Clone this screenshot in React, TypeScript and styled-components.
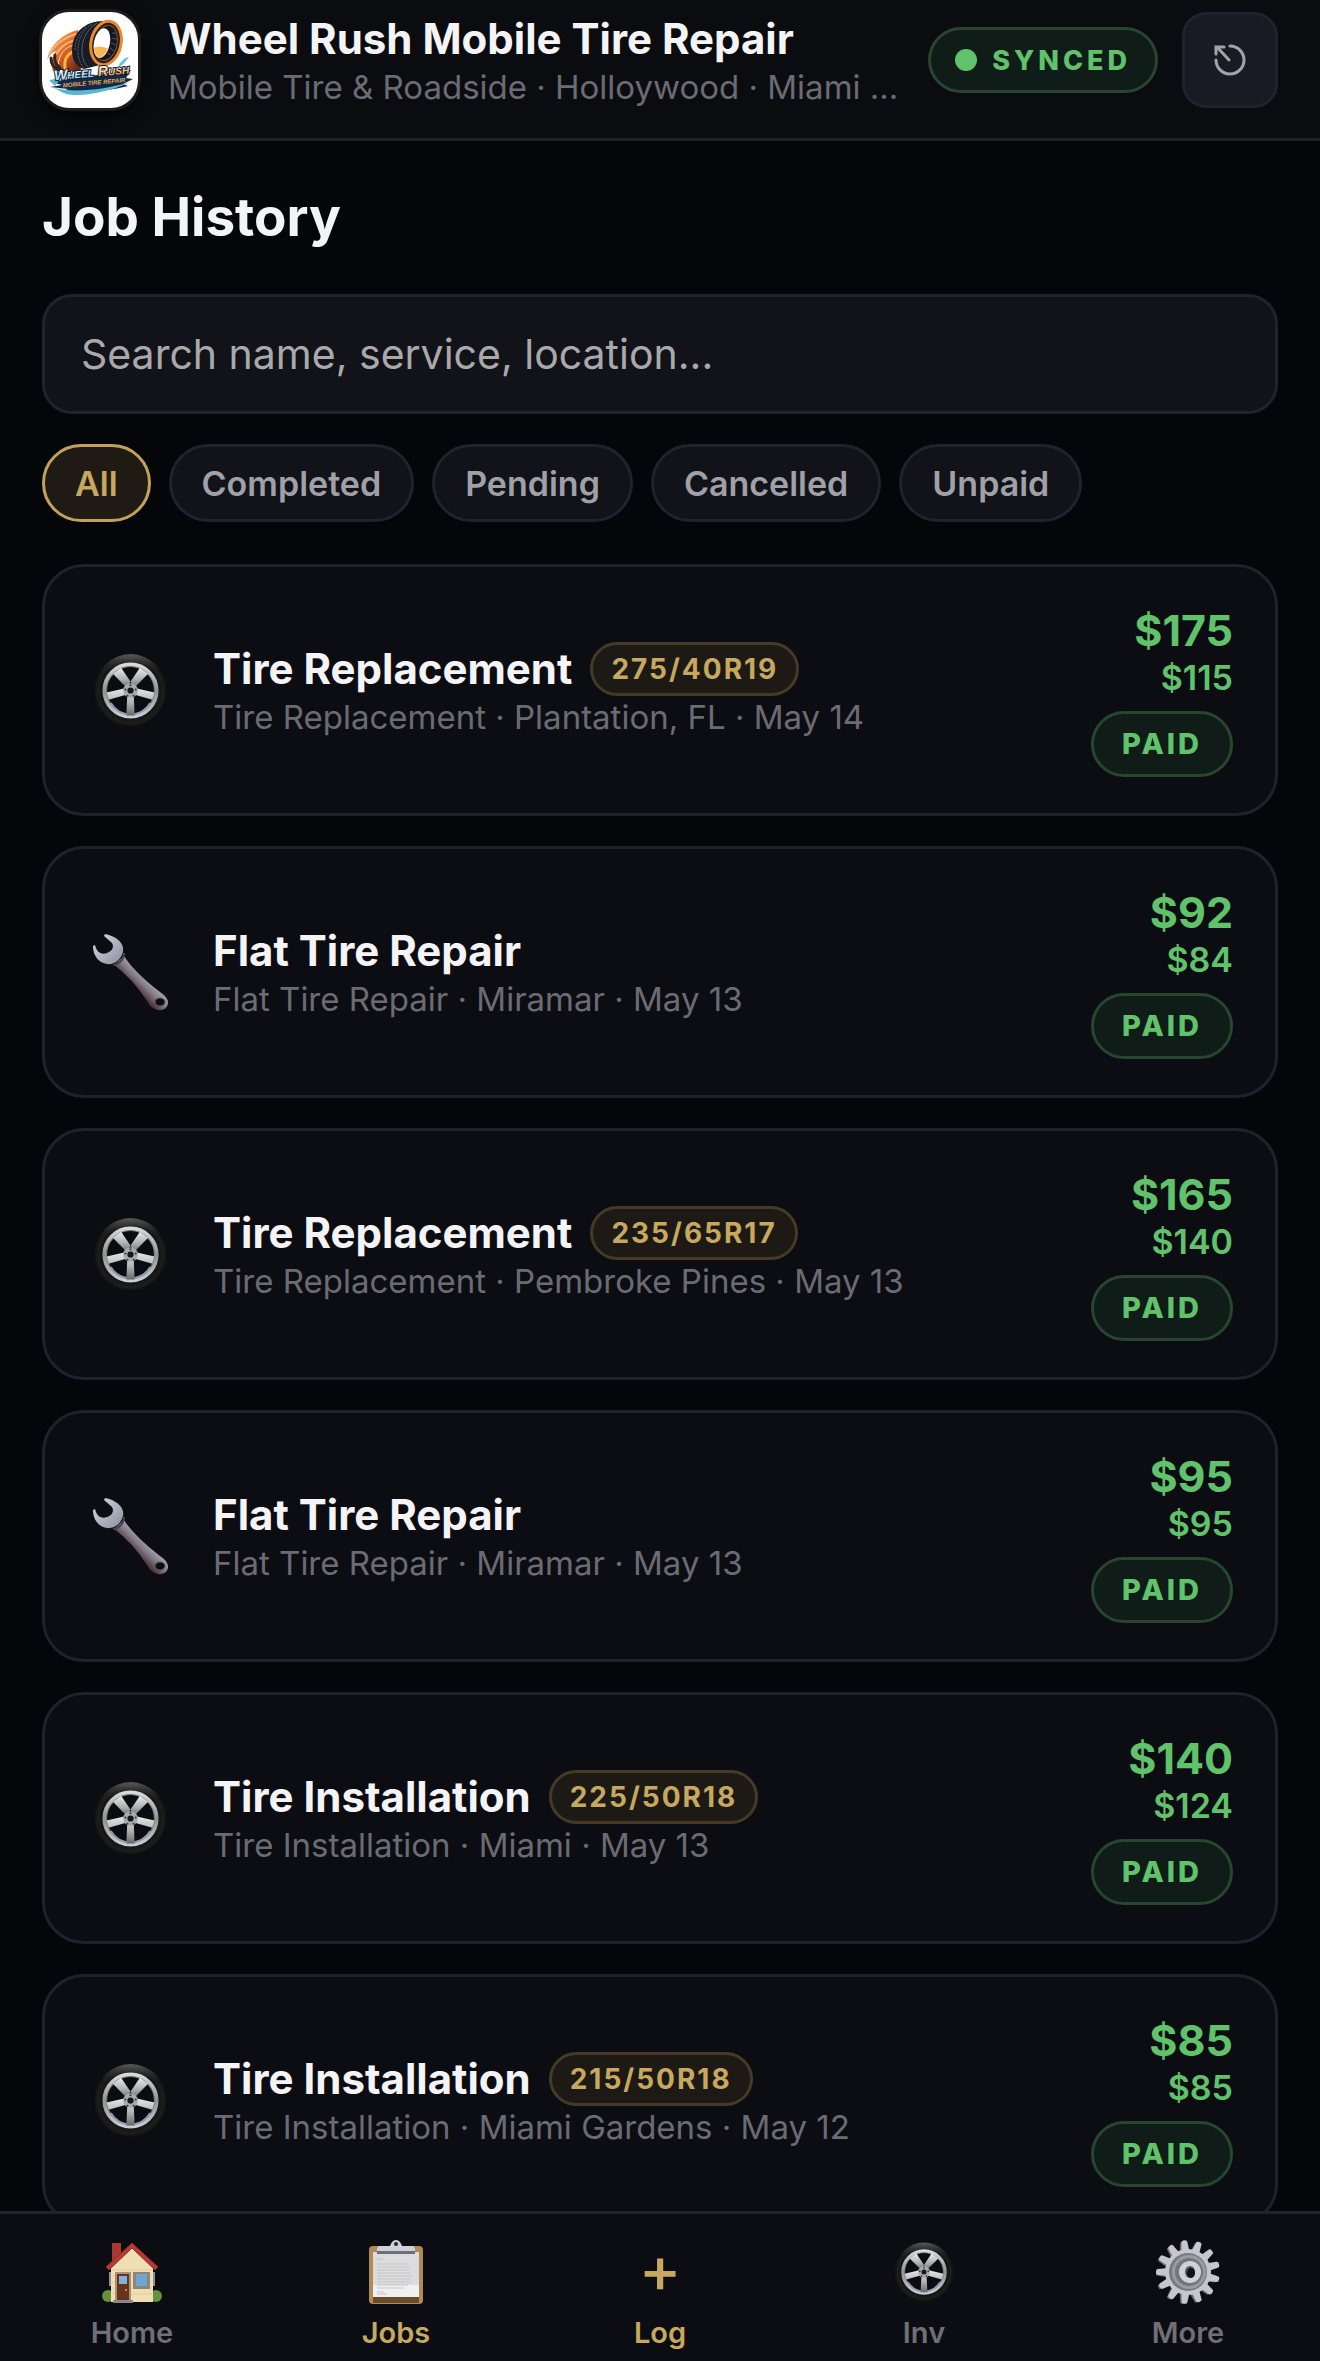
import React, { useState } from 'react';
import styled, { createGlobalStyle } from 'styled-components';

interface Job {
	id: number;
	service: string;
	size?: string;
	location: string;
	date: string;
	price: number;
	profit: number;
}

const jobs: Job[] = [
	{ id: 1, service: 'Tire Replacement', size: '275/40R19', location: 'Plantation, FL', date: 'May 14', price: 175, profit: 115 },
	{ id: 2, service: 'Flat Tire Repair', location: 'Miramar', date: 'May 13', price: 92, profit: 84 },
	{ id: 3, service: 'Tire Replacement', size: '235/65R17', location: 'Pembroke Pines', date: 'May 13', price: 165, profit: 140 },
	{ id: 4, service: 'Flat Tire Repair', location: 'Miramar', date: 'May 13', price: 95, profit: 95 },
	{ id: 5, service: 'Tire Installation', size: '225/50R18', location: 'Miami', date: 'May 13', price: 140, profit: 124 },
	{ id: 6, service: 'Tire Installation', size: '215/50R18', location: 'Miami Gardens', date: 'May 12', price: 85, profit: 85 },
];

const filters = ['All', 'Completed', 'Pending', 'Cancelled', 'Unpaid'];

const Logo = () => (
	<svg viewBox='0 0 96 96' role='img' aria-label='Wheel Rush'>
		<defs>
			<linearGradient id='flame' x1='0' y1='0' x2='1' y2='1'>
				<stop offset='0' stopColor='#f9c28b' />
				<stop offset='0.5' stopColor='#e2682a' />
				<stop offset='1' stopColor='#5a1c12' />
			</linearGradient>
			<linearGradient id='ice' x1='0' y1='0' x2='0' y2='1'>
				<stop offset='0.3' stopColor='#ffffff' />
				<stop offset='1' stopColor='#6fd0ea' />
			</linearGradient>
			<linearGradient id='fire' x1='0' y1='0' x2='0' y2='1'>
				<stop offset='0.3' stopColor='#fff3d0' />
				<stop offset='1' stopColor='#f08a1e' />
			</linearGradient>
		</defs>
		<rect width='96' height='96' fill='#fff' />
		<path d='M36 18C20 22 8 33 5 48c3-6 6-8 9-9-5 8-5 14-3 20h28z' fill='url(#flame)' />
		<g fill='none' strokeLinecap='round'>
			<path d='M34 22C22 26 12 33 8 42M33 28c-10 3-17 9-20 17' stroke='#f8b26b' strokeWidth='2' />
			<path d='M32 33c-9 2-15 9-16 20' stroke='#fbe0a8' strokeWidth='1' />
			<path d='M31 40c-6 2-9 8-8 16' stroke='#ffb43c' strokeWidth='3' />
			<path d='M9 46c0 6 3 10 8 12M13 43c-1 5 1 10 5 13' stroke='#30241f' strokeWidth='3' />
		</g>
		<path d='M78 51c3-4 6-6 9-6-3 4-6 8-11 11zM82 56c3-2 5-3 7-2-3 3-6 5-10 5z' fill='#69c7dd' />
		<path d='M64 9C44 8 30 20 30 38c0 10 4 17 12 19l16-4z' fill='#1a1c25' />
		<g fill='none' stroke='#56606f' strokeWidth='1'>
			<path d='M50 12c-10 7-14 16-14 26 0 8 2 14 6 18M44 15c-8 7-11 15-11 24' strokeDasharray='2 1' />
			<path d='M55 11C44 18 40 28 40 38c0 8 2 13 6 17' />
		</g>
		<g transform='rotate(12 64 31)'>
			<ellipse cx='64' cy='31' rx='15' ry='22' fill='#1c1e28' stroke='#e8892d' strokeWidth='3' />
			<ellipse cx='64' cy='31' rx='11' ry='18' fill='#151823' stroke='#9a4c1b' strokeWidth='1' />
			<ellipse cx='60' cy='32' rx='8' ry='15' fill='#fff' />
			<path d='M68 20l5-1M69 25l5 0M69 30l5 1M69 35l4 2M67 40l4 2' stroke='#475064' strokeWidth='1' />
			<path d='M53 38c4-2 9-3 14-2-1 6-4 10-7 11-3-1-6-4-7-9z' fill='#f8b755' />
		</g>
		<path d='M9 70l80-12-5 8 7 1-10 5 5 2c-16 4-42 8-68 6l8-3-18-2 12-2z' fill='#12294a' />
		<path d='M12 76c20 5 50 2 76-6-15 8-48 16-64 12M7 68l12-2-6 8z' fill='#59b9d3' />
		<g transform='rotate(-5 48 62)' fontFamily='"Liberation Sans", Arial, sans-serif' fontStyle='italic' fontWeight='700'>
			<g stroke='#101a33' strokeWidth='2' paintOrder='stroke'>
				<text x='12' y='65' fontSize='14' fill='url(#ice)'>W<tspan fontSize='10'>HEEL</tspan></text>
				<text x='56' y='65' fontSize='14' fill='url(#fire)'>R<tspan fontSize='10'>USH</tspan></text>
			</g>
			<text x='20' y='73' fontSize='6' fill='#e7ad51'>MOBILE TIRE REPAIR</text>
		</g>
	</svg>
);

const SyncIcon = () => (
	<svg
		viewBox='0 0 32 32'
		width='32'
		height='32'
		fill='none'
		stroke='currentColor'
		strokeWidth='3'
		strokeLinecap='round'
		aria-hidden='true'
	>
		<path d='M16 2a14 14 0 1 1-14 14' />
		<path d='M15 16L3 3M2 10V3h8' />
	</svg>
);

const TireIcon = ({ id }: { id: string }) => (
	<svg viewBox='-2 -2 76 76' aria-hidden='true'>
		<defs>
			<radialGradient id={`${id}-rubber`} cx='0.5' cy='0.5' r='0.5'>
				<stop offset='0.7' stopColor='#101010' />
				<stop offset='0.88' stopColor='#1d1d1d' />
				<stop offset='1' stopColor='#0a0a0a' />
			</radialGradient>
			<linearGradient id={`${id}-shine`} x1='0' y1='0' x2='0' y2='1'>
				<stop offset='0' stopColor='#888' stopOpacity='0.6' />
				<stop offset='0.24' stopColor='#333' stopOpacity='0' />
			</linearGradient>
			<linearGradient id={`${id}-rim`} x1='0' y1='0' x2='0' y2='1'>
				<stop offset='0' stopColor='#dadada' />
				<stop offset='0.5' stopColor='#929292' />
				<stop offset='1' stopColor='#c9ccd0' />
			</linearGradient>
			<linearGradient id={`${id}-spoke`} x1='0' y1='0' x2='0' y2='1'>
				<stop offset='0' stopColor='#ececec' />
				<stop offset='0.55' stopColor='#b0b0b0' />
				<stop offset='1' stopColor='#686868' />
			</linearGradient>
		</defs>
		<circle cx='36' cy='36' r='36' fill={`url(#${id}-rubber)`} />
		<circle cx='36' cy='36' r='35' fill={`url(#${id}-shine)`} />
		<circle cx='36' cy='36' r='25' fill='#0a0c12' stroke={`url(#${id}-rim)`} strokeWidth='4' />
		<circle cx='36' cy='36' r='23' fill='none' stroke='#7a7f86' strokeWidth='1' />
		<path d='M17 48a22 22 0 0 0 38 0' fill='none' stroke='#8a9cb2' strokeWidth='2' />
		<g fill={`url(#${id}-spoke)`}>
			<path d='M33 34L19 20l8-6 12 18zM39 34l14-14-8-6-12 18z' />
			<path d='M34 33L13 38l2 7 21-6zM38 33l21 5-2 7-21-6zM33 38l-1 22h8l-1-22z' />
		</g>
		<circle cx='36' cy='36' r='7' fill='#a9a9a9' />
		<circle cx='36' cy='36' r='3' fill='#16181d' />
		<g fill='#3a3a3c'>
			<circle cx='36' cy='31' r='1' />
			<circle cx='31' cy='35' r='1' />
			<circle cx='41' cy='35' r='1' />
			<circle cx='33' cy='41' r='1' />
			<circle cx='39' cy='41' r='1' />
		</g>
	</svg>
);

const WrenchIcon = ({ id }: { id: string }) => (
	<svg viewBox='-1 -1 79 79' aria-hidden='true'>
		<defs>
			<linearGradient id={`${id}-handle`} gradientUnits='userSpaceOnUse' x1='54' y1='42' x2='42' y2='54'>
				<stop offset='0' stopColor='#a9a7b4' />
				<stop offset='0.5' stopColor='#817983' />
				<stop offset='1' stopColor='#4b3537' />
			</linearGradient>
			<linearGradient id={`${id}-head`} x1='0' y1='0' x2='1' y2='1'>
				<stop offset='0' stopColor='#d5dbe4' />
				<stop offset='1' stopColor='#8b8e9e' />
			</linearGradient>
		</defs>
		<path
			d='M22 31L32 22Q42 38 68 58Q77 64 76 70Q74 77 66 76Q59 75 55 67Q40 44 22 31z'
			fill={`url(#${id}-handle)`}
		/>
		<path
			d='M13 0C24 2 33 9 31 18C29 26 22 31 15 30C7 29 1 22 1 12L3 11C5 19 10 21 15 19C21 17 22 12 20 9L12 2z'
			fill={`url(#${id}-head)`}
		/>
		<path d='M21 31c7-1 11-6 11-12' fill='none' stroke='#44444f' strokeWidth='2' />
		<ellipse cx='68' cy='68' rx='5' ry='4' fill='#0c0d12' stroke='#5d555c' strokeWidth='1' />
	</svg>
);

const HouseIcon = () => (
	<svg viewBox='0 0 64 64' aria-hidden='true'>
		<path d='M12 3h9v20l-9 7z' fill='#a93832' />
		<circle cx='8' cy='56' r='6' fill='#66913f' />
		<circle cx='56' cy='56' r='6' fill='#66913f' />
		<path d='M11 26L32 6l21 20v36H11z' fill='#f0dfb5' />
		<path d='M12 30h40M12 36h40M12 42h40M12 48h40M12 54h40' stroke='#dfcb9c' strokeWidth='1' />
		<path d='M32 3l26 24-3 3-23-22L9 30l-3-3z' fill='#b83a35' stroke='#8f2a27' strokeWidth='1' />
		<path d='M15 32h16v29H15z' fill='#a99078' />
		<path d='M17 34h12v26H17z' fill='#67331f' />
		<path d='M19 36h8v8h-8z' fill='#7fb3de' />
		<circle cx='26' cy='50' r='1' fill='#e4b45c' />
		<path d='M33 32h17v17H33z' fill='#8f8577' />
		<path d='M36 34h11v12H36z' fill='#6ea6d6' />
		<path d='M9 32h2v14H9zM53 32h2v14h-2z' fill='#8e8f94' />
		<path d='M13 60h20v3H13z' fill='#8d8681' />
	</svg>
);

const ClipboardIcon = () => (
	<svg viewBox='0 0 64 64' aria-hidden='true'>
		<rect x='5' y='6' width='54' height='58' rx='4' fill='#b08b57' />
		<path d='M9 57h46v6H9z' fill='#6a4b28' />
		<path d='M9 12h46v45H9z' fill='#dcdcde' />
		<path d='M9 45h46v12H9z' fill='#f0f0f2' />
		<path
			d='M13 19h7M13 24h31M13 27h33M13 30h32M13 33h34M13 36h35M13 39h33M13 42h34M13 45h31M13 48h27M13 52h7M13 54h10'
			stroke='#c6c6c9'
			strokeWidth='1'
		/>
		<path d='M13 14V9c0-2 1-3 3-3h10c1-3 3-6 6-6s5 3 6 6h10c2 0 3 1 3 3v5z' fill='#cfd1da' />
		<path d='M13 11h38v3H13z' fill='#6e6f75' />
		<circle cx='32' cy='4' r='2' fill='#25262c' />
	</svg>
);

const GearIcon = () => (
	<svg viewBox='0 0 64 64' aria-hidden='true'>
		<g transform='translate(-2 1)' fill='#6e6660'>
			{Array.from({ length: 13 }, (_, i) => (
				<path key={i} d='M28 12l2-11h4l2 11z' transform={`rotate(${(i * 360) / 13 - 7} 32 32)`} />
			))}
		</g>
		<g fill='#c5c6cf'>
			{Array.from({ length: 13 }, (_, i) => (
				<path key={i} d='M28 12l1-10q0-2 3-2t3 2l1 10z' transform={`rotate(${(i * 360) / 13 - 7} 32 32)`} />
			))}
		</g>
		<circle cx='32' cy='32' r='23' fill='#c5c6cf' />
		<circle cx='32' cy='32' r='19' fill='#777a80' />
		<circle cx='33' cy='32' r='17' fill='#999ca3' />
		<circle cx='33' cy='32' r='14' fill='#73767d' />
		<circle cx='34' cy='32' r='11' fill='#cfd0d8' />
		<ellipse cx='34' cy='32' rx='5' ry='6' fill='#51504f' />
		<ellipse cx='35' cy='33' rx='4' ry='5' fill='#111217' />
	</svg>
);

const tabs = [
	{ name: 'Home', icon: <HouseIcon /> },
	{ name: 'Jobs', icon: <ClipboardIcon /> },
	{ name: 'Log', icon: '+' },
	{ name: 'Inv', icon: <TireIcon id='inv' /> },
	{ name: 'More', icon: <GearIcon /> },
];

const App: React.FC = () => {
	const [filter, setFilter] = useState('All');
	const [search, setSearch] = useState('');

	// every job so far is completed and paid
	const visibleJobs = jobs.filter(job => {
		const text = `${job.service} ${job.location}`.toLowerCase();
		if (!text.includes(search.trim().toLowerCase())) return false;
		return filter === 'All' || filter === 'Completed';
	});

	return (
		<>
			<GlobalStyle />
			<SApp>
				<SHeader>
					<SLogo>
						<Logo />
					</SLogo>
					<SBrand>
						<div className='name'>Wheel Rush Mobile Tire Repair</div>
						<div className='tagline'>Mobile Tire &amp; Roadside · Holloywood · Miami ...</div>
					</SBrand>
					<SStatus>
						<span className='dot' />
						SYNCED
					</SStatus>
					<SSyncButton type='button' aria-label='Sync'>
						<SyncIcon />
					</SSyncButton>
				</SHeader>
				<SMain>
					<STitle>Job History</STitle>
					<SSearch
						type='text'
						aria-label='Search jobs'
						placeholder='Search name, service, location...'
						value={search}
						onChange={e => setSearch(e.target.value)}
					/>
					<SFilters>
						{filters.map(name => (
							<SChip key={name} type='button' $active={name === filter} onClick={() => setFilter(name)}>
								{name}
							</SChip>
						))}
					</SFilters>
					<SJobs>
						{visibleJobs.map(job => (
							<SJob key={job.id}>
								<SJobIcon>
									{job.size ? <TireIcon id={`job${job.id}`} /> : <WrenchIcon id={`job${job.id}`} />}
								</SJobIcon>
								<SJobInfo>
									<div className='heading'>
										<h2>{job.service}</h2>
										{job.size && <SSize>{job.size}</SSize>}
									</div>
									<p>
										{job.service} · {job.location} · {job.date}
									</p>
								</SJobInfo>
								<SJobMoney>
									<div className='price'>${job.price}</div>
									<div className='profit'>${job.profit}</div>
									<SPaid>PAID</SPaid>
								</SJobMoney>
							</SJob>
						))}
					</SJobs>
				</SMain>
				<SNav>
					{tabs.map(tab => (
						<STab key={tab.name} href={`#${tab.name.toLowerCase()}`} $gold={tab.name === 'Jobs' || tab.name === 'Log'}>
							<span className='icon'>{tab.icon}</span>
							<span>{tab.name}</span>
						</STab>
					))}
				</SNav>
			</SApp>
		</>
	);
};

export default App;

const GlobalStyle = createGlobalStyle`
	* {
		box-sizing: border-box;
	}

	body {
		margin: 0;
		background: #050609;
		color: #f4f4f7;
		font-family: Inter, 'Liberation Sans', sans-serif;
	}

	h1, h2, p, ul {
		margin: 0;
		padding: 0;
	}

	button, input {
		font-family: inherit;
	}
`;

const SApp = styled.div`
	display: flex;
	flex-direction: column;
	height: 100vh;
`;

const SHeader = styled.header`
	display: flex;
	align-items: center;
	flex-shrink: 0;
	gap: 24px;
	padding: 12px 42px 30px;
	background: #0b0c10;
	border-bottom: 3px solid #1f222a;
`;

const SLogo = styled.div`
	flex-shrink: 0;
	width: 96px;
	height: 96px;
	border-radius: 27px;
	overflow: hidden;
	box-shadow: 0 0 0 3px #1f1d1a, 0 6px 18px #000;

	svg {
		display: block;
		width: 100%;
		height: 100%;
	}
`;

const SBrand = styled.div`
	flex: 1;
	min-width: 0;
	padding-left: 6px;
	white-space: nowrap;

	.name {
		font-size: 42px;
		line-height: 54px;
		font-weight: 700;
	}

	.tagline {
		color: #6b6b73;
		font-size: 33px;
		line-height: 42px;
	}
`;

const SStatus = styled.div`
	display: flex;
	align-items: center;
	flex-shrink: 0;
	gap: 15px;
	height: 66px;
	padding: 0 24px;
	border: 3px solid #28452f;
	border-radius: 33px;
	background: #101c17;
	color: #60c36c;
	font-size: 27px;
	font-weight: 800;
	letter-spacing: 4px;

	.dot {
		width: 22px;
		height: 22px;
		border-radius: 50%;
		background: #60c36c;
	}
`;

const SSyncButton = styled.button`
	display: flex;
	align-items: center;
	justify-content: center;
	flex-shrink: 0;
	width: 96px;
	height: 96px;
	padding: 0;
	border: 3px solid #20232e;
	border-radius: 24px;
	background: #191b24;
	color: #a3a3ab;
	cursor: pointer;
`;

const SMain = styled.main`
	flex: 1;
	min-height: 0;
	padding: 42px 42px 0;
	overflow-y: auto;
	scrollbar-width: none;
`;

const STitle = styled.h1`
	margin-bottom: 42px;
	font-size: 53px;
	line-height: 69px;
	font-weight: 700;
`;

const SSearch = styled.input`
	display: block;
	width: 100%;
	height: 120px;
	padding: 0 36px;
	border: 3px solid #20222c;
	border-radius: 30px;
	background: #121318;
	color: #f4f4f7;
	font-size: 41px;
	outline: none;

	&::placeholder {
		color: #a9a9ac;
		opacity: 1;
	}
`;

const SFilters = styled.div`
	display: flex;
	flex-wrap: wrap;
	gap: 18px;
	margin: 30px 0 42px;
`;

const SChip = styled.button<{ $active: boolean }>`
	height: 78px;
	padding: 0 30px;
	border: 3px solid ${props => (props.$active ? '#c2a25b' : '#20222c')};
	border-radius: 39px;
	background: ${props => (props.$active ? '#1f1b14' : '#121318')};
	color: ${props => (props.$active ? '#c7a85f' : '#a0a0a9')};
	font-size: 34px;
	font-weight: 600;
	cursor: pointer;
`;

const SJobs = styled.ul`
	display: flex;
	flex-direction: column;
	gap: 30px;
	list-style: none;
`;

const SJob = styled.li`
	display: flex;
	align-items: center;
	gap: 40px;
	padding: 36px 42px;
	border: 3px solid #1f212b;
	border-radius: 42px;
	background: #0c0d12;
`;

const SJobIcon = styled.div`
	display: flex;
	justify-content: center;
	flex-shrink: 0;
	width: 86px;

	svg {
		width: 79px;
		height: 79px;
	}
`;

const SJobInfo = styled.div`
	flex: 1;
	min-width: 0;

	.heading {
		display: flex;
		align-items: center;
		gap: 18px;
		height: 54px;
	}

	h2 {
		font-size: 42px;
		line-height: 54px;
		font-weight: 700;
	}

	p {
		color: #6b6b73;
		font-size: 33px;
		line-height: 42px;
	}
`;

const SSize = styled.span`
	display: flex;
	align-items: center;
	height: 54px;
	padding: 0 18px;
	border: 3px solid #453a26;
	border-radius: 27px;
	background: #1d1a16;
	color: #c7a85f;
	font-size: 28px;
	font-weight: 700;
	letter-spacing: 2px;
`;

const SJobMoney = styled.div`
	display: flex;
	flex-direction: column;
	align-items: flex-end;
	flex-shrink: 0;
	color: #60c36c;

	.price {
		font-size: 43px;
		line-height: 54px;
		font-weight: 700;
	}

	.profit {
		font-size: 34px;
		line-height: 42px;
		font-weight: 600;
	}
`;

const SPaid = styled.div`
	display: flex;
	align-items: center;
	height: 66px;
	margin-top: 12px;
	padding: 0 28px 2px;
	border: 3px solid #28452f;
	border-radius: 33px;
	background: #101c17;
	font-size: 29px;
	font-weight: 800;
	letter-spacing: 3px;
`;

const SNav = styled.nav`
	display: flex;
	flex-shrink: 0;
	padding: 26px 0 7px;
	border-top: 3px solid #20222c;
	background: #0c0d12;
`;

const STab = styled.a<{ $gold: boolean }>`
	display: flex;
	flex: 1;
	flex-direction: column;
	align-items: center;
	gap: 6px;
	color: ${props => (props.$gold ? '#c7a85f' : '#6f6f76')};
	font-size: 29px;
	line-height: 42px;
	font-weight: 600;
	text-decoration: none;

	.icon {
		display: flex;
		justify-content: center;
		align-items: flex-start;
		height: 66px;
		font-size: 64px;
		line-height: 58px;
		font-weight: 500;
	}

	svg {
		width: 64px;
		height: 64px;
	}
`;
